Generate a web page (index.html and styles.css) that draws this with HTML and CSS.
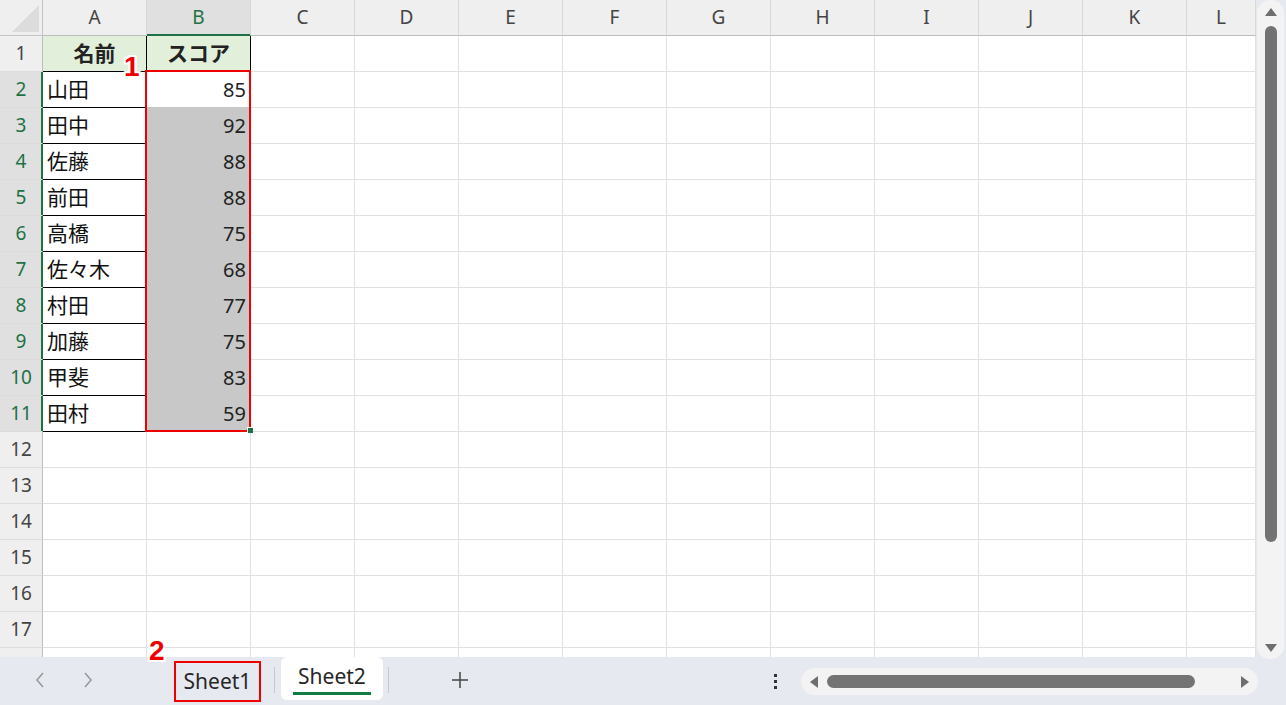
FILE: index.html
```html
<!DOCTYPE html>
<html lang="ja">
<head>
<meta charset="utf-8">
<link rel="stylesheet" href="styles.css">
</head>
<body>
<div class="app">
  <div class="top">
    <div class="sheet-area">
      <div class="sheet">
        <div class="c corner"><svg width="42" height="35" viewBox="0 0 42 35"><polygon points="12,32 39,32 39,5" fill="#dcdcdc"/></svg></div>
        <div class="c ch">A</div><div class="c ch sel">B</div><div class="c ch">C</div><div class="c ch">D</div><div class="c ch">E</div><div class="c ch">F</div><div class="c ch">G</div><div class="c ch">H</div><div class="c ch">I</div><div class="c ch">J</div><div class="c ch">K</div><div class="c ch">L</div>

        <div class="c rh">1</div><div class="c t th">名前</div><div class="c t th">スコア</div><div class="c"></div><div class="c"></div><div class="c"></div><div class="c"></div><div class="c"></div><div class="c"></div><div class="c"></div><div class="c"></div><div class="c"></div><div class="c"></div>

        <div class="c rh sel">2</div><div class="c t name">山田</div><div class="c t num act">85</div><div class="c"></div><div class="c"></div><div class="c"></div><div class="c"></div><div class="c"></div><div class="c"></div><div class="c"></div><div class="c"></div><div class="c"></div><div class="c"></div>
        <div class="c rh sel">3</div><div class="c t name">田中</div><div class="c t num hl">92</div><div class="c"></div><div class="c"></div><div class="c"></div><div class="c"></div><div class="c"></div><div class="c"></div><div class="c"></div><div class="c"></div><div class="c"></div><div class="c"></div>
        <div class="c rh sel">4</div><div class="c t name">佐藤</div><div class="c t num hl">88</div><div class="c"></div><div class="c"></div><div class="c"></div><div class="c"></div><div class="c"></div><div class="c"></div><div class="c"></div><div class="c"></div><div class="c"></div><div class="c"></div>
        <div class="c rh sel">5</div><div class="c t name">前田</div><div class="c t num hl">88</div><div class="c"></div><div class="c"></div><div class="c"></div><div class="c"></div><div class="c"></div><div class="c"></div><div class="c"></div><div class="c"></div><div class="c"></div><div class="c"></div>
        <div class="c rh sel">6</div><div class="c t name">高橋</div><div class="c t num hl">75</div><div class="c"></div><div class="c"></div><div class="c"></div><div class="c"></div><div class="c"></div><div class="c"></div><div class="c"></div><div class="c"></div><div class="c"></div><div class="c"></div>
        <div class="c rh sel">7</div><div class="c t name">佐々木</div><div class="c t num hl">68</div><div class="c"></div><div class="c"></div><div class="c"></div><div class="c"></div><div class="c"></div><div class="c"></div><div class="c"></div><div class="c"></div><div class="c"></div><div class="c"></div>
        <div class="c rh sel">8</div><div class="c t name">村田</div><div class="c t num hl">77</div><div class="c"></div><div class="c"></div><div class="c"></div><div class="c"></div><div class="c"></div><div class="c"></div><div class="c"></div><div class="c"></div><div class="c"></div><div class="c"></div>
        <div class="c rh sel">9</div><div class="c t name">加藤</div><div class="c t num hl">75</div><div class="c"></div><div class="c"></div><div class="c"></div><div class="c"></div><div class="c"></div><div class="c"></div><div class="c"></div><div class="c"></div><div class="c"></div><div class="c"></div>
        <div class="c rh sel">10</div><div class="c t name">甲斐</div><div class="c t num hl">83</div><div class="c"></div><div class="c"></div><div class="c"></div><div class="c"></div><div class="c"></div><div class="c"></div><div class="c"></div><div class="c"></div><div class="c"></div><div class="c"></div>
        <div class="c rh sel">11</div><div class="c t name">田村</div><div class="c t num hl">59</div><div class="c"></div><div class="c"></div><div class="c"></div><div class="c"></div><div class="c"></div><div class="c"></div><div class="c"></div><div class="c"></div><div class="c"></div><div class="c"></div>

        <div class="c rh">12</div><div class="c"></div><div class="c"></div><div class="c"></div><div class="c"></div><div class="c"></div><div class="c"></div><div class="c"></div><div class="c"></div><div class="c"></div><div class="c"></div><div class="c"></div><div class="c"></div>
        <div class="c rh">13</div><div class="c"></div><div class="c"></div><div class="c"></div><div class="c"></div><div class="c"></div><div class="c"></div><div class="c"></div><div class="c"></div><div class="c"></div><div class="c"></div><div class="c"></div><div class="c"></div>
        <div class="c rh">14</div><div class="c"></div><div class="c"></div><div class="c"></div><div class="c"></div><div class="c"></div><div class="c"></div><div class="c"></div><div class="c"></div><div class="c"></div><div class="c"></div><div class="c"></div><div class="c"></div>
        <div class="c rh">15</div><div class="c"></div><div class="c"></div><div class="c"></div><div class="c"></div><div class="c"></div><div class="c"></div><div class="c"></div><div class="c"></div><div class="c"></div><div class="c"></div><div class="c"></div><div class="c"></div>
        <div class="c rh">16</div><div class="c"></div><div class="c"></div><div class="c"></div><div class="c"></div><div class="c"></div><div class="c"></div><div class="c"></div><div class="c"></div><div class="c"></div><div class="c"></div><div class="c"></div><div class="c"></div>
        <div class="c rh">17</div><div class="c"></div><div class="c"></div><div class="c"></div><div class="c"></div><div class="c"></div><div class="c"></div><div class="c"></div><div class="c"></div><div class="c"></div><div class="c"></div><div class="c"></div><div class="c"></div>
        <div class="c rh"></div><div class="c"></div><div class="c"></div><div class="c"></div><div class="c"></div><div class="c"></div><div class="c"></div><div class="c"></div><div class="c"></div><div class="c"></div><div class="c"></div><div class="c"></div><div class="c"></div>
      </div>
      <div class="sel-box"></div>
      <div class="fill-handle"></div>
      <div class="annot annot1">1</div>
    </div>
    <div class="vscroll">
      <div class="vtrack">
        <svg class="varrow" width="14" height="10" viewBox="0 0 14 10"><polygon points="7,1 13,9 1,9" fill="#6e6e6e"/></svg>
        <div class="vthumb"></div>
        <div class="vspace"></div>
        <svg class="varrow" width="14" height="10" viewBox="0 0 14 10"><polygon points="1,1 13,1 7,9" fill="#6e6e6e"/></svg>
      </div>
    </div>
  </div>
  <div class="bar">
    <div class="nav">
      <svg width="12" height="18" viewBox="0 0 12 18"><polyline points="9,2 3,9 9,16" fill="none" stroke="#9a9a9a" stroke-width="1.6"/></svg>
      <svg width="12" height="18" viewBox="0 0 12 18"><polyline points="3,2 9,9 3,16" fill="none" stroke="#9a9a9a" stroke-width="1.6"/></svg>
    </div>
    <div class="tab tab1">Sheet1</div>
    <div class="sep sep1"></div>
    <div class="tab tab2"><span class="tab2-label">Sheet2</span></div>
    <div class="sep sep2"></div>
    <svg class="plus" width="18" height="18" viewBox="0 0 18 18"><path d="M9 1V17M1 9H17" stroke="#444" stroke-width="1.5"/></svg>
    <div class="spacer"></div>
    <svg class="dots" width="4" height="16" viewBox="0 0 4 16"><rect x="0" y="0" width="3" height="3" fill="#333"/><rect x="0" y="6" width="3" height="3" fill="#333"/><rect x="0" y="12" width="3" height="3" fill="#333"/></svg>
    <div class="htrack">
      <svg width="10" height="14" viewBox="0 0 10 14"><polygon points="9,1 9,13 1,7" fill="#6e6e6e"/></svg>
      <div class="hthumb"></div>
      <div class="hspace"></div>
      <svg width="10" height="14" viewBox="0 0 10 14"><polygon points="1,1 1,13 9,7" fill="#6e6e6e"/></svg>
    </div>
    <div class="annot annot2">2</div>
  </div>
</div>
</body>
</html>
```
FILE: styles.css
```css
html, body {
  margin: 0;
  padding: 0;
}
body {
  width: 1286px;
  height: 705px;
  overflow: hidden;
  background: #e6e9ef;
  font-family: "Noto Sans", "Noto Sans CJK JP", sans-serif;
  color: #222;
}
.app {
  position: relative;
  display: flex;
  flex-direction: column;
  width: 1286px;
  height: 705px;
}
.top {
  display: flex;
  height: 657px;
}
.sheet-area {
  position: relative;
  width: 1256px;
  height: 657px;
  overflow: hidden;
  background: #fff;
}
.sheet {
  display: grid;
  grid-template-columns: 43px repeat(11, 104px) 69px;
  grid-auto-rows: 36px;
}
.c {
  box-sizing: border-box;
  border-right: 1px solid #e1e1e1;
  border-bottom: 1px solid #e1e1e1;
  display: flex;
  align-items: center;
  font-size: 20px;
  line-height: 1;
  overflow: hidden;
  white-space: nowrap;
}
.corner {
  background: #efefef;
  border-right-color: #c4c4c4;
  border-bottom-color: #c4c4c4;
}
.corner svg { display: block; }
.ch {
  background: #efefef;
  justify-content: center;
  font-size: 19px;
  color: #444;
  border-right-color: #d8d8d8;
  border-bottom-color: #bdbdbd;
}
.ch.sel {
  background: #e0e0e0;
  color: #1e7145;
  border-bottom-color: #1e7145;
  box-shadow: inset 0 -1px 0 #1e7145;
}
.rh {
  background: #efefef;
  justify-content: center;
  font-size: 19px;
  color: #444;
  border-right-color: #bdbdbd;
  border-bottom-color: #dcdcdc;
}
.rh.sel {
  background: #e0e0e0;
  color: #1e7145;
  border-right-color: #1e7145;
  box-shadow: inset -1px 0 0 #1e7145;
}
.t {
  border-right-color: #000;
  border-bottom-color: #000;
  font-size: 21px;
}
.th {
  background: #e2efda;
  justify-content: center;
  font-weight: bold;
}
.name {
  padding-left: 4px;
  color: #111;
}
.num {
  justify-content: flex-end;
  padding-right: 4px;
  font-size: 20px;
  color: #222;
}
.act {
  border-bottom-color: #c6c6c6;
}
.hl {
  background: #c8c8c8;
  border-bottom-color: #c8c8c8;
}
.sel-box {
  position: absolute;
  left: 145px;
  top: 70px;
  width: 106px;
  height: 362px;
  box-sizing: border-box;
  border: 2px solid #ee0000;
}
.fill-handle {
  position: absolute;
  left: 247px;
  top: 427px;
  width: 5px;
  height: 5px;
  background: #1e7145;
  border-left: 1px solid #fff;
  border-top: 1px solid #fff;
}
.annot {
  position: absolute;
  font-family: "Liberation Sans", Arial, sans-serif;
  font-weight: bold;
  font-size: 28px;
  line-height: 1;
  color: #ee0000;
  text-shadow: 2px 0 0 #fff, -2px 0 0 #fff, 0 2px 0 #fff, 0 -2px 0 #fff,
    2px 2px 0 #fff, -2px -2px 0 #fff, 2px -2px 0 #fff, -2px 2px 0 #fff;
}
.annot1 {
  left: 124px;
  top: 53px;
}
.annot2 {
  left: 149px;
  top: -20px;
}
.vscroll {
  width: 30px;
  height: 657px;
  background: #e6e9ef;
  display: flex;
  justify-content: flex-start;
}
.vtrack {
  margin-left: 1px;
  margin-top: 0;
  width: 27px;
  height: 659px;
  background: #f3f3f3;
  border-radius: 13px;
  display: flex;
  flex-direction: column;
  align-items: center;
  box-sizing: border-box;
  padding-top: 7px;
  padding-bottom: 6px;
  position: relative;
  z-index: 1;
}
.varrow { display: block; flex: none; }
.vthumb {
  margin-top: 9px;
  width: 12px;
  height: 516px;
  border-radius: 6px;
  background: #737373;
  flex: none;
}
.vspace { flex: 1; }
.bar {
  position: relative;
  display: flex;
  align-items: flex-start;
  height: 48px;
  background: #e6e9ef;
}
.nav {
  display: flex;
  gap: 36px;
  padding-left: 34px;
  padding-top: 14px;
  width: 174px;
  box-sizing: border-box;
  flex: none;
}
.nav svg { display: block; }
.tab {
  flex: none;
  box-sizing: border-box;
  display: flex;
  align-items: center;
  justify-content: center;
  font-family: "Noto Sans", sans-serif;
  font-size: 21px;
  color: #262626;
}
.tab1 {
  margin-top: 4px;
  width: 87px;
  height: 41px;
  border: 2px solid #ee0000;
  padding-bottom: 1px;
}
.sep {
  flex: none;
  width: 1px;
  height: 26px;
  margin-top: 10px;
  background: #c6c8cc;
}
.sep1 { margin-left: 13px; }
.tab2 {
  margin-left: 6px;
  width: 102px;
  height: 43px;
  background: #fff;
  border-radius: 6px;
  flex-direction: column;
  justify-content: flex-start;
  padding-top: 6px;
}
.tab2-label {
  display: block;
  width: 78px;
  text-align: center;
  line-height: 26px;
  padding-bottom: 3px;
  border-bottom: 3px solid #107c41;
}
.sep2 { margin-left: 5px; }
.plus {
  flex: none;
  display: block;
  margin-left: 62px;
  margin-top: 14px;
}
.spacer { flex: 1; }
.dots {
  flex: none;
  display: block;
  margin-top: 17px;
}
.htrack {
  flex: none;
  margin-left: 23px;
  margin-right: 28px;
  margin-top: 11px;
  width: 457px;
  height: 27px;
  border-radius: 14px;
  background: #f3f3f3;
  display: flex;
  align-items: center;
  box-sizing: border-box;
  padding-left: 8px;
  padding-right: 8px;
}
.htrack svg { display: block; flex: none; }
.hthumb {
  flex: none;
  margin-left: 8px;
  width: 368px;
  height: 13px;
  border-radius: 7px;
  background: #737373;
}
.hspace { flex: 1; }
```
